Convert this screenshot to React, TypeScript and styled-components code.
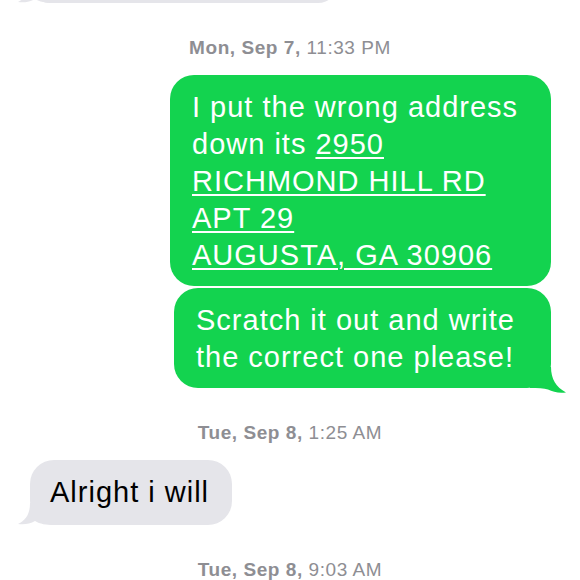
import React from "react";
import styled, { createGlobalStyle } from "styled-components";

const Global = createGlobalStyle`
  html, body { margin: 0; padding: 0; background: #ffffff; }
  body { width: 580px; height: 580px; overflow: hidden; font-family: "Liberation Sans", Arial, sans-serif; }
`;

const GREEN = "#13d34f";
const GRAY = "#e5e5ea";

const Thread = styled.div`
  display: flex;
  flex-direction: column;
  width: 580px;
`;

const Stamp = styled.div`
  align-self: center;
  margin: 34px 0 16px;
  font-size: 19px;
  line-height: 22px;
  letter-spacing: 0.55px;
  color: #8e8e93;
  white-space: nowrap;
`;

const StampDay = styled.span`
  font-weight: 700;
`;

const Row = styled.div<{ $out?: boolean; $gap?: number }>`
  display: flex;
  justify-content: ${(p) => (p.$out ? "flex-end" : "flex-start")};
  padding: 0 ${(p) => (p.$out ? "29px" : "0")} 0 ${(p) => (p.$out ? "0" : "30px")};
  margin-top: ${(p) => p.$gap ?? 0}px;
`;

const Bubble = styled.div<{ $out?: boolean; $w?: number }>`
  position: relative;
  box-sizing: border-box;
  width: ${(p) => (p.$w ? `${p.$w}px` : "auto")};
  padding: 14px ${(p) => (p.$out ? "20px" : "23px")} ${(p) => (p.$out ? "12px" : "14px")}
    ${(p) => (p.$out ? "22px" : "20px")};
  border-radius: 24px;
  background: ${(p) => (p.$out ? GREEN : GRAY)};
  color: ${(p) => (p.$out ? "#ffffff" : "#000000")};
  font-size: 29px;
  line-height: 37px;
  letter-spacing: 1px;
  white-space: nowrap;
`;

const PartialBubble = styled(Bubble)`
  height: 40px;
  margin-top: -37px;
  padding: 0;
`;

const Line = styled.div``;

const Link = styled.span`
  text-decoration: underline;
  text-decoration-thickness: 1.5px;
  text-underline-offset: 3px;
`;

const TailSvg = styled.svg<{ $out?: boolean }>`
  position: absolute;
  width: 36px;
  height: 30px;
  ${(p) =>
    p.$out
      ? "right: -15px; bottom: -7px; transform: scaleX(-1);"
      : "left: -12px; bottom: -4px;"}
`;

const Tail: React.FC<{ out?: boolean; color: string }> = ({ out, color }) => (
  <TailSvg $out={out} viewBox="0 0 36 30">
    <path
      d={
        out
          ? "M15 2 C15 14 10 22 0 27.5 C7 28.4 13 27.2 18 24.6 C22 23.4 28 23 36 23 L36 2 Z"
          : "M12 4 C12 15 8 21 0 25 C6 25.8 12 25 17 22 C22 25 28 26 36 26 L36 4 Z"
      }
      fill={color}
    />
  </TailSvg>
);

export default function App() {
  return (
    <>
      <Global />
      <Thread>
        <Row>
          <PartialBubble $w={308}>
            <Tail color={GRAY} />
          </PartialBubble>
        </Row>

        <Stamp>
          <StampDay>Mon, Sep 7,</StampDay> 11:33 PM
        </Stamp>

        <Row $out>
          <Bubble $out $w={381}>
            <Line>I put the wrong address</Line>
            <Line>
              down its <Link>2950</Link>
            </Line>
            <Line>
              <Link>RICHMOND HILL RD</Link>
            </Line>
            <Line>
              <Link>APT 29</Link>
            </Line>
            <Line>
              <Link>AUGUSTA, GA 30906</Link>
            </Line>
          </Bubble>
        </Row>

        <Row $out $gap={2}>
          <Bubble $out $w={377}>
            <Line>Scratch it out and write</Line>
            <Line>the correct one please!</Line>
            <Tail out color={GREEN} />
          </Bubble>
        </Row>

        <Stamp>
          <StampDay>Tue, Sep 8,</StampDay> 1:25 AM
        </Stamp>

        <Row>
          <Bubble>
            <Line>Alright i will</Line>
            <Tail color={GRAY} />
          </Bubble>
        </Row>

        <Stamp>
          <StampDay>Tue, Sep 8,</StampDay> 9:03 AM
        </Stamp>
      </Thread>
    </>
  );
}
